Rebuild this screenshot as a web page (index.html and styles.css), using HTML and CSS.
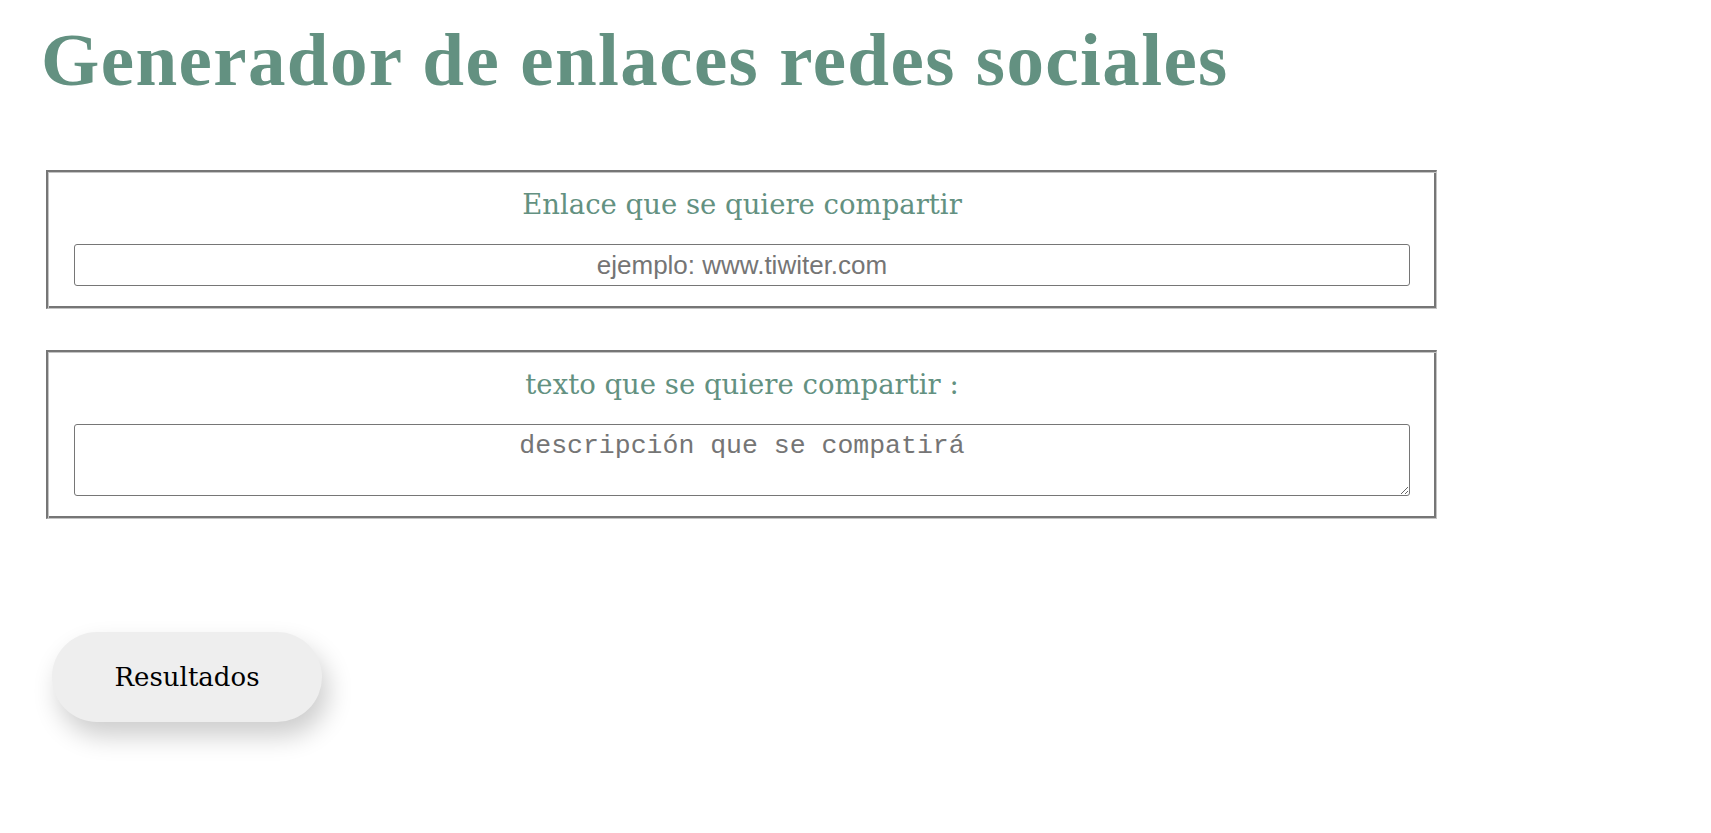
FILE: index.html
```html
<!DOCTYPE html>
<html lang="es">
<head>
<meta charset="utf-8">
<title>Generador de enlaces redes sociales</title>
<link rel="stylesheet" href="styles.css">
</head>
<body>
<main class="page">
  <h1 class="title">Generador de enlaces redes sociales</h1>
  <form class="form">
    <fieldset class="box">
      <label class="box-label" for="enlace">Enlace que se quiere compartir</label>
      <input class="field" id="enlace" type="text" placeholder="ejemplo: www.tiwiter.com">
    </fieldset>
    <fieldset class="box">
      <label class="box-label" for="texto">texto que se quiere compartir :</label>
      <textarea class="area" id="texto" placeholder="descripción que se compatirá"></textarea>
    </fieldset>
    <button class="btn" type="button">Resultados</button>
  </form>
</main>
</body>
</html>
```
FILE: styles.css
```css
html, body {
  background: #ffffff;
}
body {
  margin: 8px;
  font-family: "DejaVu Serif", "Liberation Serif", serif;
}
.page {
  padding: 0 0 80px 33px;
}
.title {
  margin: 12px 0 0 0;
  font-family: "Liberation Serif", serif;
  font-weight: bold;
  font-size: 75px;
  line-height: 80px;
  color: #639181;
  letter-spacing: 1.4px;
}
.form {
  display: flex;
  flex-direction: column;
  align-items: flex-start;
  margin-top: 70px;
}
.box {
  box-sizing: border-box;
  width: 1391px;
  margin: 0 0 0 5px;
  padding: 0 26px 22px;
  border-style: solid;
  border-width: 2px 1px 1px 2px;
  border-color: #767676 #c4c4c4 #c4c4c4 #767676;
  box-shadow: inset 1px 1px 0 #c4c4c4, inset -2px -2px 0 #767676;
  display: flex;
  flex-direction: column;
}
.box + .box {
  margin-top: 41px;
}
.box-label {
  display: block;
  text-align: center;
  padding-top: 15px;
  margin-bottom: 23px;
  line-height: 34px;
  font-size: 27.5px;
  color: #639181;
  font-family: "DejaVu Serif", serif;
}
.field {
  box-sizing: border-box;
  width: 100%;
  height: 42px;
  margin: 0;
  padding: 0 4px;
  border: 1px solid #767676;
  border-radius: 3px;
  text-align: center;
  font-family: "Liberation Sans", Arial, sans-serif;
  font-size: 26px;
  color: #333;
  background: #fff;
}
.area {
  box-sizing: border-box;
  width: 100%;
  height: 72px;
  margin: 0;
  padding: 6px 4px 2px;
  border: 1px solid #767676;
  border-radius: 3px;
  text-align: center;
  font-family: "Liberation Mono", "Courier New", monospace;
  font-size: 26.5px;
  line-height: 30px;
  color: #333;
  background: #fff;
  resize: both;
}
.field::placeholder,
.area::placeholder {
  color: #757575;
  opacity: 1;
}
.btn {
  margin: 113px 0 0 11px;
  width: 270px;
  height: 90px;
  border: none;
  border-radius: 45px;
  background: #eeeeee;
  box-shadow: 6px 14px 26px rgba(0, 0, 0, 0.2);
  font-family: "DejaVu Serif", serif;
  font-size: 26px;
  color: #000;
  cursor: pointer;
}
```
